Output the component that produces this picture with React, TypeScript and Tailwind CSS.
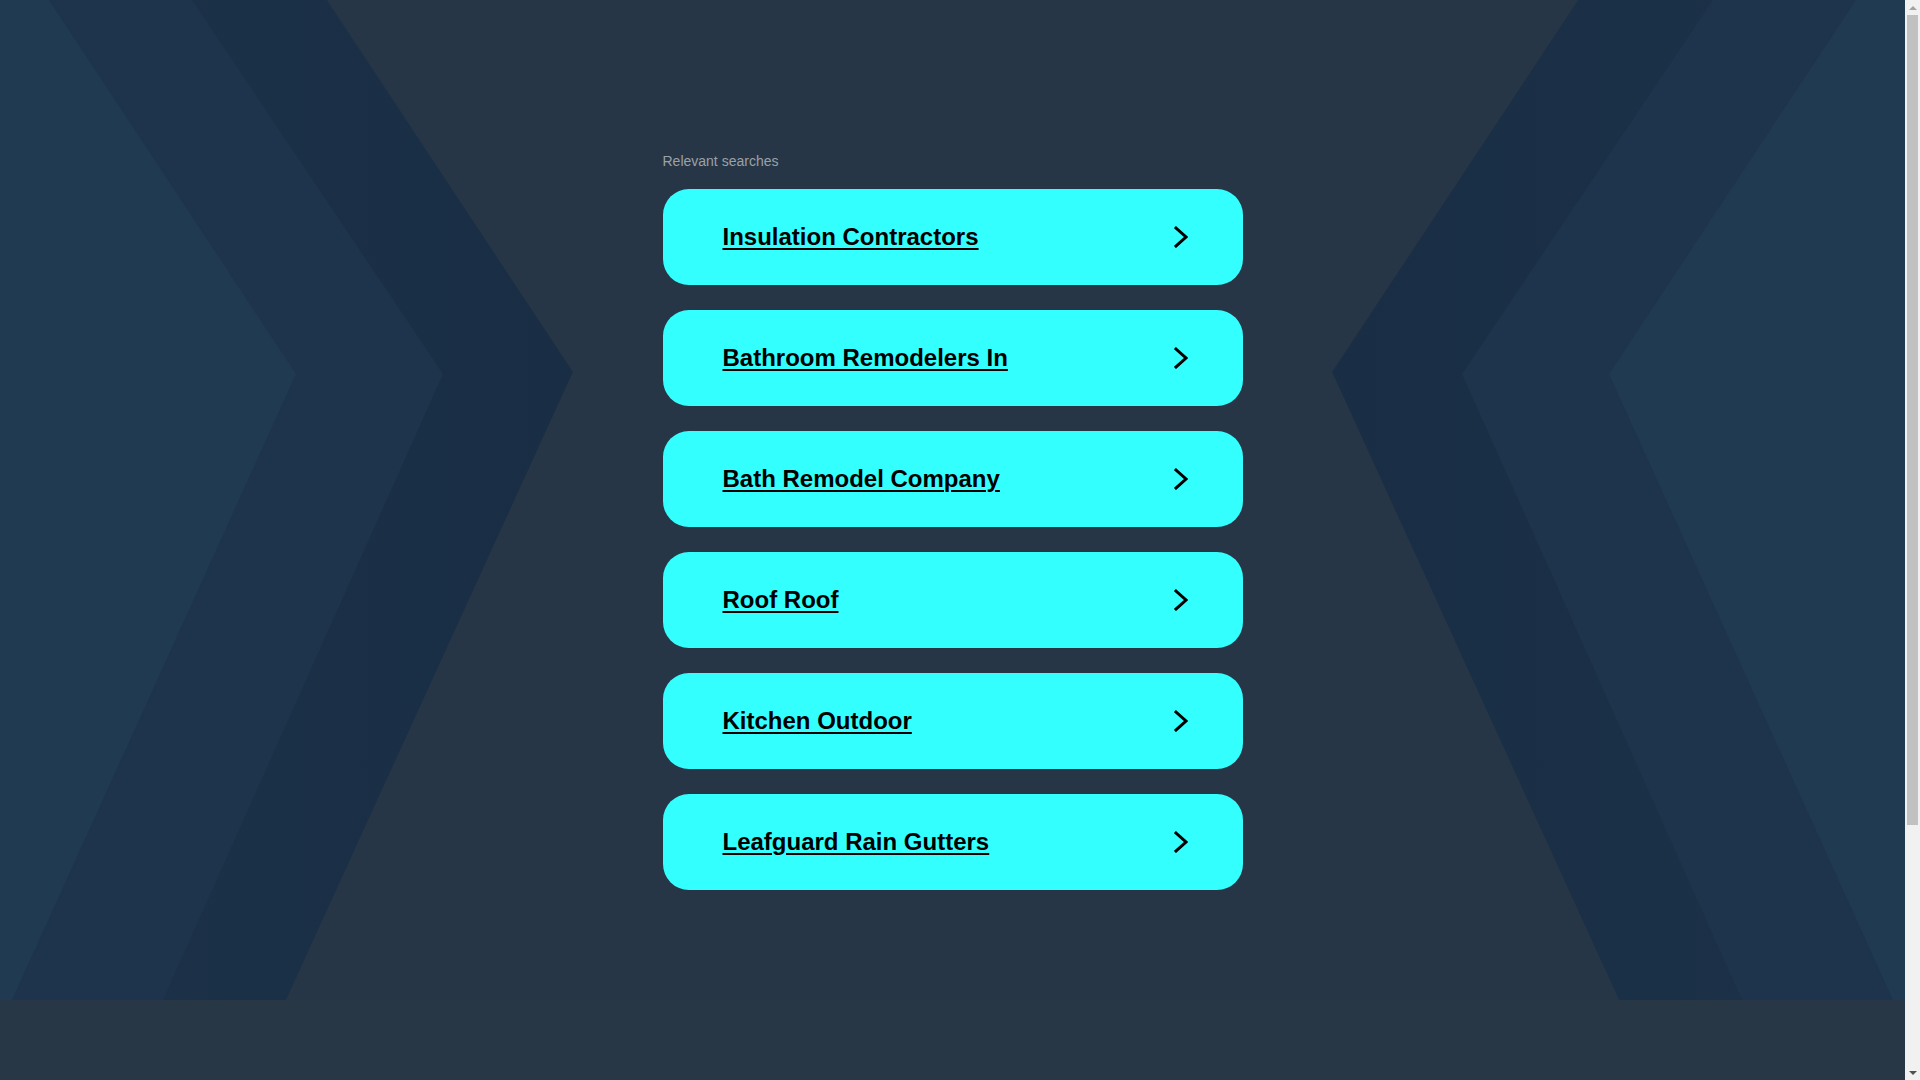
import React from "react";

const SEARCHES = [
  "Insulation Contractors",
  "Bathroom Remodelers In",
  "Bath Remodel Company",
  "Roof Roof",
  "Kitchen Outdoor",
  "Leafguard Rain Gutters",
];

function ChevronBackdrop() {
  return (
    <svg
      className="absolute inset-0 h-full w-full"
      viewBox="0 0 1905 1000"
      preserveAspectRatio="none"
      aria-hidden="true"
    >
      <defs>
        <linearGradient id="bandL" x1="0" y1="0" x2="1" y2="0">
          <stop offset="0" stopColor="#1c3249" />
          <stop offset="1" stopColor="#192e44" />
        </linearGradient>
        <linearGradient id="bandR" x1="1" y1="0" x2="0" y2="0">
          <stop offset="0" stopColor="#1c3249" />
          <stop offset="1" stopColor="#192e44" />
        </linearGradient>
      </defs>
      {/* left chevrons */}
      <polygon points="0,0 327,0 573,372 286,1000 0,1000" fill="url(#bandL)" />
      <polygon points="0,0 192,0 443,374 163,1000 0,1000" fill="#1e344c" />
      <polygon points="0,0 49,0 296,374 12,1000 0,1000" fill="#203a51" />
      {/* right chevrons */}
      <polygon points="1905,0 1578,0 1332,372 1619,1000 1905,1000" fill="url(#bandR)" />
      <polygon points="1905,0 1713,0 1462,374 1742,1000 1905,1000" fill="#1e344c" />
      <polygon points="1905,0 1856,0 1609,374 1893,1000 1905,1000" fill="#203a51" />
    </svg>
  );
}

function SearchCard({ label }: { label: string }) {
  return (
    <a
      href="#"
      className="flex h-[96px] items-center justify-between rounded-[26px] bg-[#33ffff] pl-[60px] pr-[55px] text-black"
    >
      <span className="text-[24px] font-bold underline decoration-2 underline-offset-[3px]">
        {label}
      </span>
      <svg width="14" height="22" viewBox="0 0 14 22" aria-hidden="true">
        <polyline
          points="2,2 12,11 2,20"
          fill="none"
          stroke="#000"
          strokeWidth="3"
          strokeLinecap="square"
        />
      </svg>
    </a>
  );
}

// the page scrolls in the original, so a classic scrollbar sits on the right
function Scrollbar() {
  return (
    <div className="flex h-[1080px] w-[15px] shrink-0 flex-col items-center bg-[#f1f1f1]">
      <div className="flex h-[15px] items-center justify-center">
        <span className="h-0 w-0 border-x-[4px] border-b-[4px] border-x-transparent border-b-[#a3a3a3]" />
      </div>
      <div className="h-[810px] w-[11px] bg-[#c1c1c1]" />
      <div className="flex-1" />
      <div className="flex h-[15px] items-center justify-center">
        <span className="h-0 w-0 border-x-[4px] border-t-[4px] border-x-transparent border-t-[#505050]" />
      </div>
    </div>
  );
}

export default function App() {
  return (
    <div
      className="flex h-[1080px] overflow-hidden bg-[#273646]"
      style={{ fontFamily: '"Liberation Sans", Arial, sans-serif' }}
    >
      <div className="flex min-w-0 flex-1 flex-col">
        <main className="relative h-[1000px] overflow-hidden">
          <ChevronBackdrop />
          <div className="relative mx-auto w-[580px] pt-[151px]">
            <p className="mb-[17px] text-[14px] text-[#9ba1a8]">Relevant searches</p>
            <div className="flex flex-col gap-[25px]">
              {SEARCHES.map((s) => (
                <SearchCard key={s} label={s} />
              ))}
            </div>
          </div>
        </main>
        <footer className="flex-1 bg-[#283746]" />
      </div>
      <Scrollbar />
    </div>
  );
}
